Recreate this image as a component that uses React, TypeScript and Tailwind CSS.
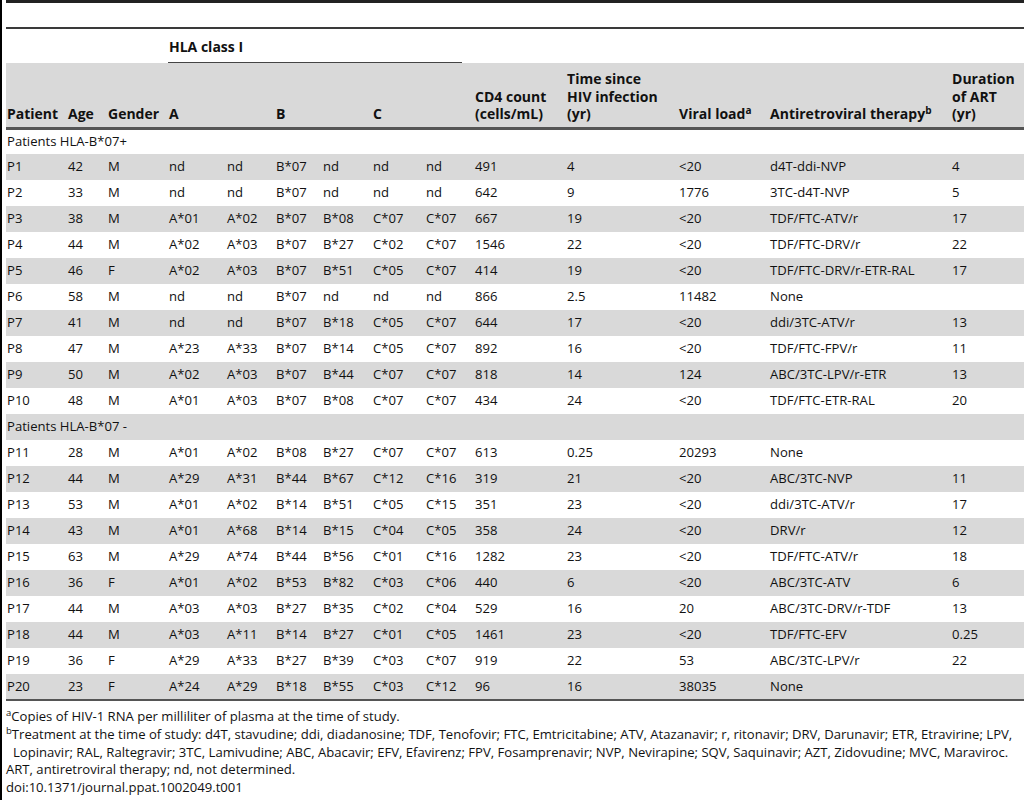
import React from "react";

type Row = string[];

const group1: Row[] = [
  ["P1", "42", "M", "nd", "nd", "B*07", "nd", "nd", "nd", "491", "4", "<20", "d4T-ddi-NVP", "4"],
  ["P2", "33", "M", "nd", "nd", "B*07", "nd", "nd", "nd", "642", "9", "1776", "3TC-d4T-NVP", "5"],
  ["P3", "38", "M", "A*01", "A*02", "B*07", "B*08", "C*07", "C*07", "667", "19", "<20", "TDF/FTC-ATV/r", "17"],
  ["P4", "44", "M", "A*02", "A*03", "B*07", "B*27", "C*02", "C*07", "1546", "22", "<20", "TDF/FTC-DRV/r", "22"],
  ["P5", "46", "F", "A*02", "A*03", "B*07", "B*51", "C*05", "C*07", "414", "19", "<20", "TDF/FTC-DRV/r-ETR-RAL", "17"],
  ["P6", "58", "M", "nd", "nd", "B*07", "nd", "nd", "nd", "866", "2.5", "11482", "None", ""],
  ["P7", "41", "M", "nd", "nd", "B*07", "B*18", "C*05", "C*07", "644", "17", "<20", "ddi/3TC-ATV/r", "13"],
  ["P8", "47", "M", "A*23", "A*33", "B*07", "B*14", "C*05", "C*07", "892", "16", "<20", "TDF/FTC-FPV/r", "11"],
  ["P9", "50", "M", "A*02", "A*03", "B*07", "B*44", "C*07", "C*07", "818", "14", "124", "ABC/3TC-LPV/r-ETR", "13"],
  ["P10", "48", "M", "A*01", "A*03", "B*07", "B*08", "C*07", "C*07", "434", "24", "<20", "TDF/FTC-ETR-RAL", "20"],
];

const group2: Row[] = [
  ["P11", "28", "M", "A*01", "A*02", "B*08", "B*27", "C*07", "C*07", "613", "0.25", "20293", "None", ""],
  ["P12", "44", "M", "A*29", "A*31", "B*44", "B*67", "C*12", "C*16", "319", "21", "<20", "ABC/3TC-NVP", "11"],
  ["P13", "53", "M", "A*01", "A*02", "B*14", "B*51", "C*05", "C*15", "351", "23", "<20", "ddi/3TC-ATV/r", "17"],
  ["P14", "43", "M", "A*01", "A*68", "B*14", "B*15", "C*04", "C*05", "358", "24", "<20", "DRV/r", "12"],
  ["P15", "63", "M", "A*29", "A*74", "B*44", "B*56", "C*01", "C*16", "1282", "23", "<20", "TDF/FTC-ATV/r", "18"],
  ["P16", "36", "F", "A*01", "A*02", "B*53", "B*82", "C*03", "C*06", "440", "6", "<20", "ABC/3TC-ATV", "6"],
  ["P17", "44", "M", "A*03", "A*03", "B*27", "B*35", "C*02", "C*04", "529", "16", "20", "ABC/3TC-DRV/r-TDF", "13"],
  ["P18", "44", "M", "A*03", "A*11", "B*14", "B*27", "C*01", "C*05", "1461", "23", "<20", "TDF/FTC-EFV", "0.25"],
  ["P19", "36", "F", "A*29", "A*33", "B*27", "B*39", "C*03", "C*07", "919", "22", "53", "ABC/3TC-LPV/r", "22"],
  ["P20", "23", "F", "A*24", "A*29", "B*18", "B*55", "C*03", "C*12", "96", "16", "38035", "None", ""],
];

const widths = [61, 40, 61, 58, 49, 47, 50, 53, 49, 92, 112, 91, 182, 73];

function DataRow({ row, gray }: { row: Row; gray: boolean }) {
  return (
    <tr className={gray ? "bg-[#d9d9d9] h-[26px]" : "bg-white h-[26px]"}>
      {row.map((c, i) => (
        <td key={i} className="pl-[1px] p-0 align-middle whitespace-nowrap">
          {c}
        </td>
      ))}
    </tr>
  );
}

function GroupRow({ label, gray }: { label: string; gray: boolean }) {
  return (
    <tr className={gray ? "bg-[#d9d9d9] h-[26px]" : "bg-white h-[26px]"}>
      <td colSpan={14} className="pl-[1px] p-0 align-middle whitespace-nowrap">
        {label}
      </td>
    </tr>
  );
}

const thCls = "pl-[1px] p-0 pb-[4px] text-left align-bottom font-bold whitespace-nowrap text-[14px]";

export default function App() {
  return (
    <div
      className="flex w-[1024px] h-[800px] bg-white text-[#111] overflow-hidden"
      style={{ fontFamily: '"Open Sans", "Noto Sans", sans-serif' }}
    >
      <div className="w-[2px] h-[800px] bg-black shrink-0" />
      <div className="pl-[4px] flex flex-col">
        <div className="w-[1018px] h-[3px] bg-[#222]" />
        <div className="h-[24px]" />
        <div className="w-[1018px] border-t-[2px] border-[#3a3a3a]" />
        <table className="table-fixed border-collapse text-[13.1px] leading-[17.5px] w-[1018px]">
          <colgroup>
            {widths.map((w, i) => (
              <col key={i} style={{ width: w }} />
            ))}
          </colgroup>
          <thead>
            <tr className="h-[34px]">
              <th colSpan={3} className="p-0" />
              <th colSpan={6} className="p-0 text-left align-bottom font-bold text-[14px]">
                <div className="mr-[12px] pl-[1px] border-b border-[#444] pb-[7px]">HLA class I</div>
              </th>
              <th colSpan={5} className="p-0" />
            </tr>
            <tr className="bg-[#d9d9d9] h-[65px] border-b-[3px] border-[#555]">
              {["Patient", "Age", "Gender", "A", "", "B", "", "C", ""].map((h, i) => (
                <th key={i} className={thCls}>
                  {h}
                </th>
              ))}
              <th className={thCls}>
                CD4 count
                <br />
                (cells/mL)
              </th>
              <th className={thCls}>
                Time since
                <br />
                HIV infection
                <br />
                (yr)
              </th>
              <th className={thCls}>
                Viral load<sup className="text-[10px] top-[-5px]">a</sup>
              </th>
              <th className={thCls}>
                Antiretroviral therapy<sup className="text-[10px] top-[-5px]">b</sup>
              </th>
              <th className={thCls}>
                Duration
                <br />
                of ART
                <br />
                (yr)
              </th>
            </tr>
          </thead>
          <tbody className="border-b-[2px] border-[#555]">
            <GroupRow label="Patients HLA-B*07+" gray={false} />
            {group1.map((r, i) => (
              <DataRow key={r[0]} row={r} gray={i % 2 === 0} />
            ))}
            <GroupRow label="Patients HLA-B*07 -" gray={true} />
            {group2.map((r, i) => (
              <DataRow key={r[0]} row={r} gray={i % 2 === 1} />
            ))}
          </tbody>
        </table>
        <div className="pt-[7px] text-[13.1px] leading-[17.8px] whitespace-nowrap">
          <div>
            <sup className="text-[9.5px] top-[-5px]">a</sup>Copies of HIV-1 RNA per milliliter of plasma at the time of study.
          </div>
          <div>
            <sup className="text-[9.5px] top-[-5px]">b</sup>Treatment at the time of study: d4T, stavudine; ddi, diadanosine; TDF, Tenofovir; FTC, Emtricitabine; ATV, Atazanavir; r, ritonavir; DRV, Darunavir; ETR, Etravirine; LPV,
          </div>
          <div className="pl-[7px]">
            Lopinavir; RAL, Raltegravir; 3TC, Lamivudine; ABC, Abacavir; EFV, Efavirenz; FPV, Fosamprenavir; NVP, Nevirapine; SQV, Saquinavir; AZT, Zidovudine; MVC, Maraviroc.
          </div>
          <div>ART, antiretroviral therapy; nd, not determined.</div>
          <div>doi:10.1371/journal.ppat.1002049.t001</div>
        </div>
      </div>
    </div>
  );
}
